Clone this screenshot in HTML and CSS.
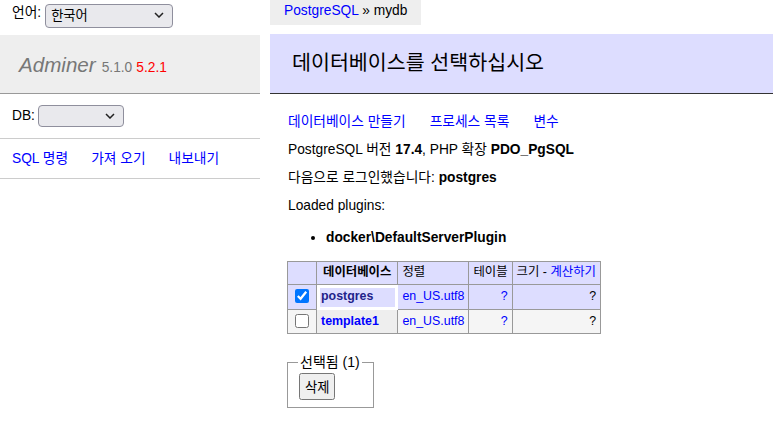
FILE: index.html
```html
<!DOCTYPE html>
<html lang="ko">
<head>
    <meta charset="utf-8">
    <title>데이터베이스를 선택하십시오 - Adminer</title>
    <link rel="stylesheet" href="styles.css">
</head>
<body>
<div class="page">
    <div class="side">
        <div class="lang">
            언어:
            <span class="select-wrap lang-select">
                <select><option>한국어</option></select>
                <svg class="chevron" width="10" height="6" viewBox="0 0 10 6"><path d="M1 1l4 4 4-4" fill="none" stroke="#222" stroke-width="1.5"/></svg>
            </span>
        </div>
        <h1><span class="logo">Adminer</span> <span class="version">5.1.0</span> <span class="new-version">5.2.1</span></h1>
        <p class="menu-db">DB:
            <span class="select-wrap db-select">
                <select><option></option></select>
                <svg class="chevron" width="10" height="6" viewBox="0 0 10 6"><path d="M1 1l4 4 4-4" fill="none" stroke="#222" stroke-width="1.5"/></svg>
            </span>
        </p>
        <p class="menu-links">
            <a href="#">SQL 명령</a>
            <a href="#">가져 오기</a>
            <a href="#">내보내기</a>
        </p>
    </div>

    <div class="main">
        <div class="breadcrumb"><a href="#">PostgreSQL</a> » mydb</div>
        <h2>데이터베이스를 선택하십시오</h2>
        <div class="content">
            <p class="links">
                <a href="#">데이터베이스 만들기</a>
                <a href="#">프로세스 목록</a>
                <a href="#">변수</a>
            </p>
            <p>PostgreSQL 버전 <b>17.4</b>, PHP 확장 <b>PDO_PgSQL</b></p>
            <p>다음으로 로그인했습니다: <b>postgres</b></p>
            <p>Loaded plugins:</p>
            <ul class="plugins">
                <li><b>docker\DefaultServerPlugin</b></li>
            </ul>

            <table class="dbs">
                <thead>
                    <tr><td class="chk"></td><th>데이터베이스</th><td>정렬</td><td>테이블</td><td>크기 - <a href="#">계산하기</a></td></tr>
                </thead>
                <tbody>
                    <tr class="checked">
                        <td class="chk"><input type="checkbox" checked></td>
                        <th class="focus"><a href="#" class="current">postgres</a></th>
                        <td><a href="#">en_US.utf8</a></td>
                        <td class="num"><a href="#">?</a></td>
                        <td class="num">?</td>
                    </tr>
                    <tr class="odd">
                        <td class="chk"><input type="checkbox"></td>
                        <th><a href="#">template1</a></th>
                        <td><a href="#">en_US.utf8</a></td>
                        <td class="num"><a href="#">?</a></td>
                        <td class="num">?</td>
                    </tr>
                </tbody>
            </table>

            <fieldset class="selected">
                <legend>선택됨 (1)</legend>
                <button>삭제</button>
            </fieldset>
        </div>
    </div>
</div>
</body>
</html>
```

FILE: styles.css
```css
body {
    margin: 0;
    color: #000;
    background: #fff;
    font: 13.75px/1.25 "Liberation Sans", Arial, "Noto Sans CJK KR", sans-serif;
}
a { color: blue; text-decoration: none; }
select, button { font: 13.3px "Liberation Sans", "Noto Sans CJK KR", sans-serif; color: #000; }

.page { display: flex; gap: 10px; }

/* select look */
.select-wrap { position: relative; display: inline-block; }
.select-wrap select {
    appearance: none;
    width: 100%;
    height: 100%;
    padding: 0 20px 0 5px;
    background: #e9e9ed;
    border: 1px solid #8f8f9d;
    border-radius: 4px;
}
.chevron { position: absolute; right: 9px; top: 50%; margin-top: -3px; pointer-events: none; }

/* left menu */
.side { width: 260px; flex: none; }
.lang {
    height: 35px;
    padding: 0 0 0 12px;
    display: flex;
    align-items: flex-start;
    gap: 4px;
    line-height: 26px;
}
.lang-select { width: 128px; height: 24px; margin-top: 3px; }
h1 {
    margin: 0;
    height: 58px;
    padding: 0 0 0 19px;
    display: flex;
    align-items: baseline;
    line-height: 60px;
    background: #eee;
    border-bottom: 1px solid #999;
    color: #777;
    font-weight: normal;
    font-size: 20.6px;
}
.logo { font-style: italic; margin-right: 6px; }
.version { font-size: 13.75px; color: #777; margin-right: 4px; }
.new-version { font-size: 13.75px; color: red; }
.menu-db, .menu-links {
    margin: 0;
    padding: 0 0 0 12px;
    border-bottom: 1px solid #ccc;
    display: flex;
    align-items: center;
}
.menu-db { height: 44px; gap: 3px; }
.db-select { width: 86px; height: 22px; }
.menu-links { height: 39px; gap: 23px; }

/* main column */
.main { flex: 1; }
.breadcrumb {
    display: inline-block;
    height: 25px;
    line-height: 22px;
    padding: 0 14px;
    background: #eee;
}
h2 {
    margin: 9px 0 0;
    height: 59px;
    line-height: 58px;
    padding: 0 0 0 22px;
    background: #ddf;
    border-bottom: 1px solid #333;
    font-weight: normal;
    font-size: 20.6px;
}
.content { padding: 0 0 0 18px; }
.content p { margin: 0; height: 28px; line-height: 28px; }
.content .links { margin-top: 14px; display: flex; gap: 24px; }
.plugins { margin: 4px 0 0; padding: 0 0 0 38px; line-height: 28px; }

/* databases table */
.dbs {
    margin: 9px 0 0 -1px;
    border-collapse: collapse;
    border-top: 1px solid #999;
    border-left: 1px solid #999;
    font-size: 12.4px;
    white-space: nowrap;
}
.dbs td, .dbs th {
    border-right: 1px solid #999;
    border-bottom: 1px solid #999;
    padding: 0 4px;
    height: 22px;
    text-align: left;
}
.dbs tbody tr:first-child td, .dbs tbody tr:first-child th { height: 24px; }
.dbs tbody tr + tr td, .dbs tbody tr + tr th { height: 23px; }
.dbs thead td, .dbs thead th { background: #ddf; }
.dbs thead th { text-align: center; padding: 0 6px; }
.dbs th { background: #eee; }
.dbs .chk { width: 20px; text-align: center; padding: 0 4px; }
.dbs .chk input { margin: 3px 0 0; width: 14px; height: 14px; }
.dbs .num { text-align: right; }
.dbs tbody td:nth-child(4) { width: 33px; }
.dbs .checked td, .dbs .checked th { background: #ddf; }
.dbs .focus { outline: 3px solid #fff; outline-offset: -3px; }
.dbs .current { color: #22228a; }
.dbs .odd td { background: #f5f5f5; }
.dbs tbody th { font-weight: bold; width: 68px; }

.selected {
    display: inline-block;
    margin: 20px 0 0 -1px;
    padding: 0 11px 7px;
    border: 1px solid #999;
}
.selected legend { padding: 0 2px; margin-left: -1px; font-size: 14px; }
.selected button { padding: 2px 4px; margin-top: 1px; }
```
